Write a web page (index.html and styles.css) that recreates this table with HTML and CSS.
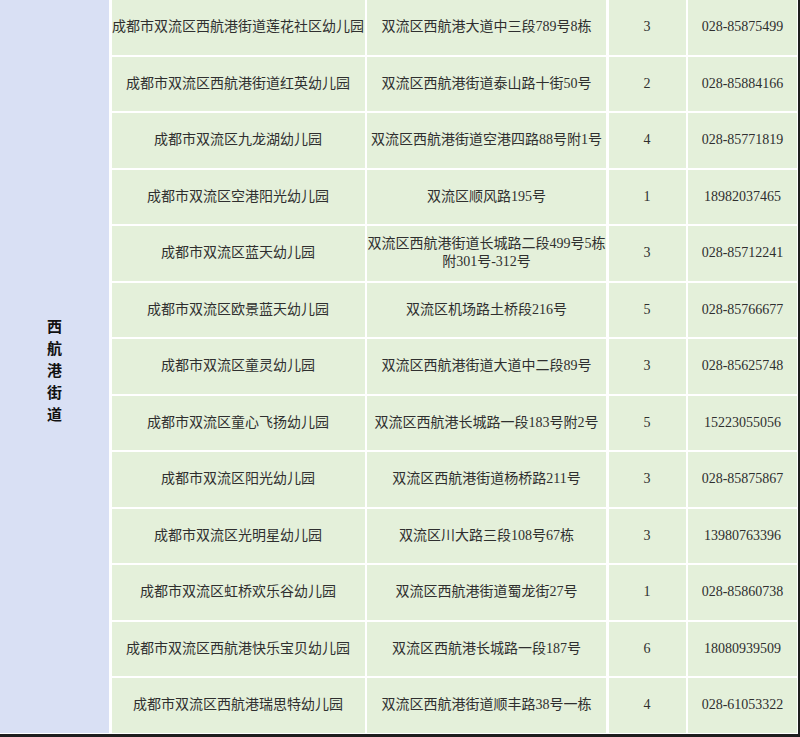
FILE: index.html
```html
<!DOCTYPE html>
<html lang="zh-CN">
<head>
<meta charset="utf-8">
<title>西航港街道幼儿园</title>
<link rel="stylesheet" href="styles.css">
</head>
<body>
<div class="frame">
  <div class="grid">
    <div class="district"><span>西</span><span>航</span><span>港</span><span>街</span><span>道</span></div>

    <div class="cell">成都市双流区西航港街道莲花社区幼儿园</div>
    <div class="cell">双流区西航港大道中三段789号8栋</div>
    <div class="cell">3</div>
    <div class="cell">028-85875499</div>

    <div class="cell">成都市双流区西航港街道红英幼儿园</div>
    <div class="cell">双流区西航港街道泰山路十街50号</div>
    <div class="cell">2</div>
    <div class="cell">028-85884166</div>

    <div class="cell">成都市双流区九龙湖幼儿园</div>
    <div class="cell">双流区西航港街道空港四路88号附1号</div>
    <div class="cell">4</div>
    <div class="cell">028-85771819</div>

    <div class="cell">成都市双流区空港阳光幼儿园</div>
    <div class="cell">双流区顺风路195号</div>
    <div class="cell">1</div>
    <div class="cell">18982037465</div>

    <div class="cell">成都市双流区蓝天幼儿园</div>
    <div class="cell">双流区西航港街道长城路二段499号5栋<br>附301号-312号</div>
    <div class="cell">3</div>
    <div class="cell">028-85712241</div>

    <div class="cell">成都市双流区欧景蓝天幼儿园</div>
    <div class="cell">双流区机场路土桥段216号</div>
    <div class="cell">5</div>
    <div class="cell">028-85766677</div>

    <div class="cell">成都市双流区童灵幼儿园</div>
    <div class="cell">双流区西航港街道大道中二段89号</div>
    <div class="cell">3</div>
    <div class="cell">028-85625748</div>

    <div class="cell">成都市双流区童心飞扬幼儿园</div>
    <div class="cell">双流区西航港长城路一段183号附2号</div>
    <div class="cell">5</div>
    <div class="cell">15223055056</div>

    <div class="cell">成都市双流区阳光幼儿园</div>
    <div class="cell">双流区西航港街道杨桥路211号</div>
    <div class="cell">3</div>
    <div class="cell">028-85875867</div>

    <div class="cell">成都市双流区光明星幼儿园</div>
    <div class="cell">双流区川大路三段108号67栋</div>
    <div class="cell">3</div>
    <div class="cell">13980763396</div>

    <div class="cell">成都市双流区虹桥欢乐谷幼儿园</div>
    <div class="cell">双流区西航港街道蜀龙街27号</div>
    <div class="cell">1</div>
    <div class="cell">028-85860738</div>

    <div class="cell">成都市双流区西航港快乐宝贝幼儿园</div>
    <div class="cell">双流区西航港长城路一段187号</div>
    <div class="cell">6</div>
    <div class="cell">18080939509</div>

    <div class="cell">成都市双流区西航港瑞思特幼儿园</div>
    <div class="cell">双流区西航港街道顺丰路38号一栋</div>
    <div class="cell">4</div>
    <div class="cell">028-61053322</div>
  </div>
</div>
</body>
</html>
```

FILE: styles.css
```css
html, body {
  margin: 0;
  padding: 0;
  background: #ffffff;
}

.frame {
  width: 797px;
  height: 733px;
  padding: 0 1px 1px 0;
  border-right: 2px solid #1e1e1e;
  border-bottom: 3px solid #1e1e1e;
  background: #ffffff;
  overflow: hidden;
}

.grid {
  display: grid;
  grid-template-columns: 109px 253px 239px 77px 109px;
  grid-template-rows: repeat(13, 54.5px);
  column-gap: 2.5px;
  row-gap: 2px;
  font-family: "Liberation Serif", "Noto Sans CJK SC", serif;
  font-size: 14px;
  color: #2f2f2f;
}

.district {
  grid-row: 1 / span 13;
  grid-column: 1;
  background: #d9e0f4;
  display: flex;
  flex-direction: column;
  align-items: center;
  justify-content: center;
  padding-top: 8px;
  font-family: "Noto Sans CJK SC", sans-serif;
  font-weight: bold;
  font-size: 15px;
  line-height: 22px;
  color: #111111;
}

.cell {
  background: #e4f0da;
  display: flex;
  align-items: center;
  justify-content: center;
  text-align: center;
  line-height: 18px;
  white-space: nowrap;
}
```
